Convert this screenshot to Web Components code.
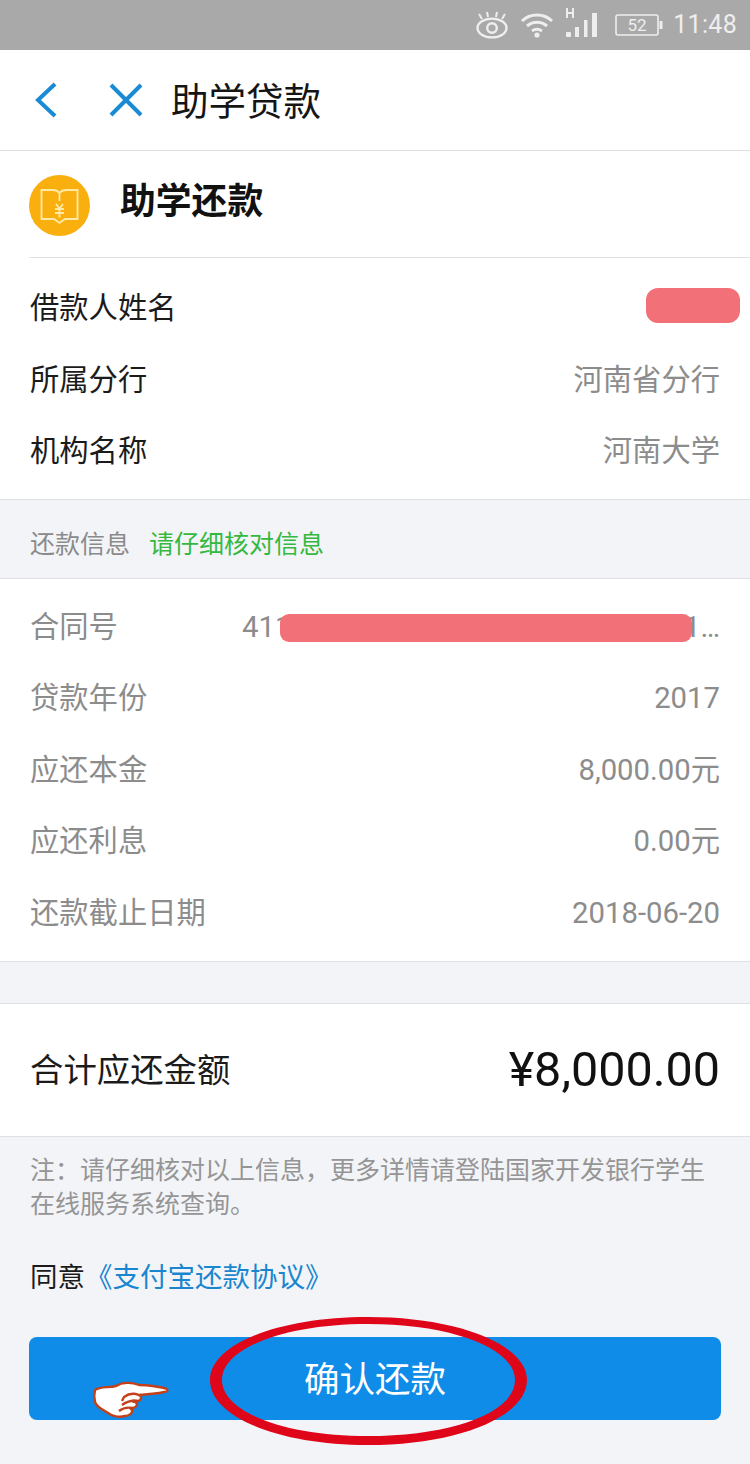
<!DOCTYPE html>
<html lang="zh">
<head>
<meta charset="utf-8">
<title>助学贷款</title>
<style>
    html, body { margin: 0; padding: 0; }
    body {
        position: relative;
        width: 750px;
        height: 1464px;
        overflow: hidden;
        background: #f3f4f8;
        font-family: Roboto, "Noto Sans CJK SC", sans-serif;
    }
</style>
</head>
<body>
<status-bar></status-bar>
<nav-bar>助学贷款</nav-bar>

<loan-title>助学还款</loan-title>
<row-group inset>
    <info-row label="借款人姓名" strong><red-mask style="width:94px;height:35px;right:10px;top:15px;border-radius:12px"></red-mask></info-row>
    <info-row label="所属分行" strong>河南省分行</info-row>
    <info-row label="机构名称" strong>河南大学</info-row>
</row-group>

<section-tip tip="请仔细核对信息">还款信息</section-tip>

<row-group>
    <info-row label="合同号"><contract-no></contract-no><red-mask style="left:280px;width:412px;height:28px;top:23px;border-radius:9px"></red-mask></info-row>
    <info-row label="贷款年份">2017</info-row>
    <info-row label="应还本金">8,000.00元</info-row>
    <info-row label="应还利息">0.00元</info-row>
    <info-row label="还款截止日期">2018-06-20</info-row>
</row-group>

<total-bar amount="¥8,000.00">合计应还金额</total-bar>
<note-text>注：请仔细核对以上信息，更多详情请登陆国家开发银行学生在线服务系统查询。</note-text>
<agree-line>支付宝还款协议</agree-line>
<pay-button>确认还款</pay-button>

<hand-ink></hand-ink>

<script>
const define = (name, html) => customElements.define(name, class extends HTMLElement {
    constructor() {
        super();
        this.attachShadow({mode: 'open'});
        this.shadowRoot.innerHTML = html(this);
    }
});

define('status-bar', () => `
    <style>
        :host { display: flex; align-items: center; justify-content: flex-end; height: 50px; background: #a9a9a9; color: #eee; padding-right: 13px; box-sizing: border-box; }
        svg { display: block; }
        .time { font: 25px/50px Roboto, sans-serif; margin-left: 10px; letter-spacing: .3px; }
    </style>
    <svg width="34" height="28" viewBox="0 0 34 28" style="margin-right:11px" fill="none" stroke="#eee" stroke-width="2.4">
        <ellipse cx="17" cy="17" rx="14.5" ry="9.4"/><circle cx="17" cy="17" r="4.8"/>
        <path d="M7 8 4 3M13 6l-1-5M21 6l1-5M27 8l3-5" stroke-width="2"/>
    </svg>
    <svg width="34" height="26" viewBox="0 0 34 26" style="margin-right:10px" fill="none" stroke="#eee" stroke-width="3">
        <path d="M2 9C10 1 24 1 32 9M7 14c6-5 14-5 20 0M12 19c3-2 7-2 10 0"/><circle cx="17" cy="23" r="2.6" fill="#eee" stroke="none"/>
    </svg>
    <svg width="34" height="34" viewBox="0 0 34 34" style="margin-right:17px;margin-top:-4px" fill="#eee">
        <path d="M2 2h2v4h4V2h2v10H8V8H4v4H2z"/>
        <rect x="2" y="26" width="5" height="5" rx="1"/><rect x="11" y="21" width="4" height="10"/><rect x="20" y="14" width="3.500" height="17"/><rect x="28" y="7" width="5" height="24"/>
    </svg>
    <svg width="48" height="24" viewBox="0 0 48 24" fill="none" stroke="#eee" stroke-width="1.6">
        <rect x="1" y="2" width="42" height="20" rx="2"/><path d="M46 8v8" stroke-width="3"/>
        <text x="22" y="18" text-anchor="middle" font-family="Roboto, sans-serif" font-size="17" fill="#eee" stroke="none">52</text>
    </svg>
    <span class="time">11:48</span>
`);

define('nav-bar', () => `
    <style>
        :host { display: flex; align-items: center; height: 101px; background: #fff; border-bottom: 1px solid #dedede; box-sizing: border-box; }
        svg { display: block; flex: none; }
        .title { font: 37.500px/1 "Noto Sans CJK SC", sans-serif; color: #151515; margin: -2px 0 0 28px; }
    </style>
    <svg width="24" height="36" viewBox="0 0 24 36" style="margin-left:34px" fill="none" stroke="#1a8ad4" stroke-width="4">
        <path d="M21 2 4 18l17 16"/>
    </svg>
    <svg width="34" height="34" viewBox="0 0 34 34" style="margin-left:51px" fill="none" stroke="#1a8ad4" stroke-width="4">
        <path d="M2 2l30 30M32 2 2 32"/>
    </svg>
    <span class="title"><slot></slot></span>
`);

define('loan-title', () => `
    <style>
        :host { display: flex; align-items: center; height: 107px; background: #fff; padding-left: 29px; position: relative; box-sizing: border-box; }
        :host::after { content: ""; position: absolute; left: 29px; right: 0; bottom: 0; height: 1px; background: #e2e2e2; }
        svg { display: block; margin-top: 2px; }
        .name { font: 700 35.800px/1 "Noto Sans CJK SC", sans-serif; color: #111; margin-left: 30px; margin-top: -12px; }
    </style>
    <svg width="61" height="61" viewBox="0 0 61 61" fill="none" stroke="#ffe9a8" stroke-width="1.8">
        <circle cx="30.500" cy="30.500" r="30.500" fill="#f9b00f" stroke="none"/>
        <path d="M24 15h-11.500v29h12.500l5.500 4 5.500-4h12.500v-29h-11.500c-3 0-5 1-6.500 3-1.500-2-3.500-3-6.500-3zM30.500 18v8"/>
        <path d="M27 29l3.500 4.500 3.500-4.500M26 34h9M26 38h9M30.500 33.500v9"/>
    </svg>
    <span class="name"><slot></slot></span>
`);

define('row-group', () => `
    <style>
        :host { display: block; background: #fff; padding: 12px 0; border-bottom: 1px solid #dfe0e3; }
        :host([inset]) { padding: 14.500px 0 11.500px; }
    </style>
    <slot></slot>
`);

define('info-row', el => `
    <style>
        :host { display: flex; align-items: center; justify-content: space-between; position: relative; height: 71.600px; padding: 0 30px; font: 29.300px/40px Roboto, "Noto Sans CJK SC", sans-serif; }
        .label { color: ${el.hasAttribute('strong') ? '#1b1b1b' : '#8c8c8c'}; }
        .value { color: #8c8c8c; }
    </style>
    <span class="label">${el.getAttribute('label')}</span>
    <span class="value"><slot></slot></span>
`);

define('red-mask', () => `
    <style>
        :host { display: block; position: absolute; background: #f27178; }
    </style>
`);

define('contract-no', () => `
    <style>
        :host { display: flex; width: 478px; justify-content: space-between; }
    </style>
    <span>411</span><span>1…</span>
`);

define('section-tip', el => `
    <style>
        :host { display: flex; align-items: center; height: 79px; padding-left: 30px; font: 25px/1 "Noto Sans CJK SC", sans-serif; color: #8a8a8a; border-bottom: 1px solid #dfe0e3; box-sizing: border-box; padding-top: 8px; }
        .tip { color: #35b83f; margin-left: 19px; }
    </style>
    <slot></slot><span class="tip">${el.getAttribute('tip')}</span>
`);

define('total-bar', el => `
    <style>
        :host { display: flex; align-items: center; justify-content: space-between; height: 134px; margin-top: 41px; padding: 0 30px; background: #fff; border-top: 1px solid #dfe0e3; border-bottom: 1px solid #dfe0e3; box-sizing: border-box; }
        .label { font: 33.400px/1 "Noto Sans CJK SC", sans-serif; color: #1b1b1b; margin-top: -4px; }
        .amount { font: 48.500px/1 Roboto, sans-serif; color: #111; }
    </style>
    <span class="label"><slot></slot></span>
    <span class="amount">${el.getAttribute('amount')}</span>
`);

define('note-text', () => `
    <style>
        :host { display: block; padding: 14px 30px 0; font: 25px/34px "Noto Sans CJK SC", sans-serif; color: #959595; }
    </style>
    <slot></slot>
`);

define('agree-line', () => `
    <style>
        :host { display: block; padding: 36px 30px 0; font: 27.500px/40px "Noto Sans CJK SC", sans-serif; color: #1b1b1b; }
        .link { color: #1a86cf; }
    </style>
    同意<span class="link">《<slot></slot>》</span>
`);

define('pay-button', () => `
    <style>
        :host { display: flex; align-items: center; justify-content: center; height: 83px; margin: 42px 29px 0; padding-bottom: 4px; box-sizing: border-box; border-radius: 8px; background: #0e8ce8; color: #fff; font: 35.500px/1 "Noto Sans CJK SC", sans-serif; }
    </style>
    <slot></slot>
`);

define('hand-ink', () => `
    <style>
        :host { display: block; position: absolute; left: 0; top: 0; pointer-events: none; }
        svg { display: block; position: absolute; }
    </style>
    <svg width="340" height="140" viewBox="0 0 340 140" style="left:205px;top:1312px">
        <path fill-rule="evenodd" fill="#e0061a" d="M163 5C252 5 322 32 322 68C322 105 252 133 163 133C74 133 5 105 5 68C5 32 74 5 163 5ZM163 12C80 12 17 36 17 68C17 101 82 124 163 124C246 124 310 101 310 68C310 36 246 12 163 12Z"/>
    </svg>
    <svg width="78" height="40" viewBox="0 0 78 40" style="left:92px;top:1380px" fill="#fff" stroke="#c4401a" stroke-width="2.4" stroke-linejoin="round">
        <path d="M3 10C8 6 16 8 24 6C30 2 40 2 47 5C56 5 70 7 75 9C76 11 75 12 72 12C64 14 56 14 47 15C50 16 50 21 45 21C38 20 41 22 43 22C47 24 44 28 40 28C37 28 39 29 40 30C41 33 37 36 33 36C27 38 20 36 16 33C12 30 5 28 3 22C2 18 2 14 3 10Z"/>
        <path d="M47 15C42 13 36 14 32 17L30 21M45 21C39 20 34 22 30 25M40 28C35 27 31 28 27 31" fill="none"/>
    </svg>
`);
</script>
</body>
</html>
